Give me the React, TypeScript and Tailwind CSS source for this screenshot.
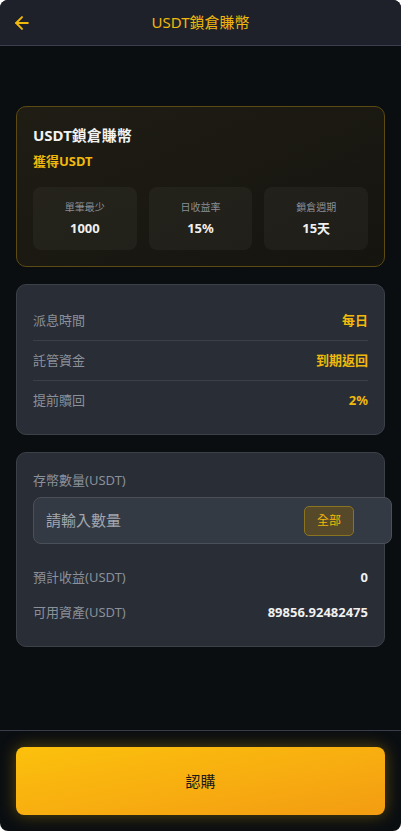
import { ArrowLeft } from "lucide-react";

const stats = [
  { label: "單筆最少", value: "1000" },
  { label: "日收益率", value: "15%" },
  { label: "鎖倉週期", value: "15天" },
];

const terms = [
  { label: "派息時間", value: "每日" },
  { label: "託管資金", value: "到期返回" },
  { label: "提前贖回", value: "2%" },
];

export default function App() {
  return (
    <div className="bg-white h-[831px] font-['Noto_Sans','Noto_Sans_CJK_TC',sans-serif]">
      <div className="h-full flex flex-col bg-[#0b0e11] rounded-lg overflow-hidden">
        {/* Header */}
        <header className="h-[46px] shrink-0 relative flex items-center justify-center bg-[#1e2129] border-b border-[#3b3e4e]">
          <button className="absolute left-[12px] top-[13px] text-[#f0b90b]">
            <ArrowLeft size={20} strokeWidth={2.4} />
          </button>
          <h1 className="text-[15px] text-[#f0b90b]">USDT鎖倉賺幣</h1>
        </header>

        {/* Content */}
        <main className="flex-1 px-4 pt-[60px] flex flex-col gap-[17px]">
          {/* Product card */}
          <section className="rounded-[10px] border border-[#5b4a12] bg-gradient-to-br from-[#1f1d14] to-[#15140f] p-4">
            <h2 className="text-[15px] leading-[24px] font-bold text-[#f2f2f2]">USDT鎖倉賺幣</h2>
            <p className="mt-[3px] text-[13px] leading-[22px] font-bold text-[#f0b90b]">獲得USDT</p>
            <div className="mt-[15px] grid grid-cols-3 gap-3">
              {stats.map((s) => (
                <div key={s.label} className="h-[63px] rounded-lg bg-white/[0.04] flex flex-col items-center justify-center gap-[5px]">
                  <span className="text-[10px] leading-[14px] text-[#8a8e96]">{s.label}</span>
                  <span className="text-[13px] leading-[18px] font-bold text-[#f0f0f0]">{s.value}</span>
                </div>
              ))}
            </div>
          </section>

          {/* Terms */}
          <section className="rounded-[10px] border border-[#3b4049] bg-[#282d36] px-4 pt-4 pb-[13px]">
            {terms.map((t, i) => (
              <div
                key={t.label}
                className={
                  "h-[40px] flex items-center justify-between" +
                  (i < terms.length - 1 ? " border-b border-[#3a3f49]" : "")
                }
              >
                <span className="text-[13px] text-[#8b9099]">{t.label}</span>
                <span className="text-[13px] font-bold text-[#f0b90b]">{t.value}</span>
              </div>
            ))}
          </section>

          {/* Amount */}
          <section className="rounded-[10px] border border-[#3b4049] bg-[#282d36] px-4 pt-[17px] pb-[21px]">
            <div className="text-[13px] leading-[20px] text-[#8b9099]">存幣數量(USDT)</div>
            <div className="mt-[7px] w-[359px] h-[47px] rounded-lg border border-[#4a4f58] bg-[#343a44] flex items-center pl-[12px] pr-[37px]">
              <input
                placeholder="請輸入數量"
                className="flex-1 min-w-0 bg-transparent outline-none text-[15px] text-white placeholder:text-[#a3a7ae]"
              />
              <button className="h-[30px] w-[50px] rounded-[5px] border border-[#8a7420] bg-[#56492a] text-[12px] text-[#f0b90b]">
                全部
              </button>
            </div>
            <div className="mt-[22px] h-[24px] flex items-center justify-between">
              <span className="text-[13px] text-[#8b9099]">預計收益(USDT)</span>
              <span className="text-[13px] font-bold text-[#f0f0f0]">0</span>
            </div>
            <div className="mt-[11px] h-[24px] flex items-center justify-between">
              <span className="text-[13px] text-[#8b9099]">可用資產(USDT)</span>
              <span className="text-[13px] font-bold text-[#f0f0f0]">89856.92482475</span>
            </div>
          </section>
        </main>

        {/* Footer */}
        <footer className="shrink-0 border-t border-[#3a3d4a] px-4 pt-4 pb-4">
          <button className="w-full h-[68px] rounded-lg bg-gradient-to-br from-[#fcc10c] to-[#f39c12] shadow-[0_0_16px_rgba(240,185,11,0.35)] text-[15px] text-[#1a1a1a]">
            認購
          </button>
        </footer>
      </div>
    </div>
  );
}
